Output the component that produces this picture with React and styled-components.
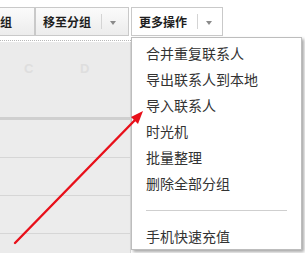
import React from 'react';
import styled, { createGlobalStyle } from 'styled-components';

const Global = createGlobalStyle`
  html, body {
    margin: 0;
    padding: 0;
    background: #fff;
  }
  body {
    font-family: "Noto Sans CJK SC", "Liberation Sans", sans-serif;
    width: 305px;
    height: 253px;
    overflow: hidden;
  }
`

const Page = styled.div`
  position: relative;
  width: 305px;
  height: 253px;
  overflow: hidden;
`

const Toolbar = styled.div`
  display: flex;
  align-items: flex-start;
  padding-top: 7px;
  margin-left: -60px;
  height: 30px;
`

const ToolButton = styled.div`
  display: flex;
  align-items: center;
  justify-content: ${p => p.$end ? 'flex-end' : 'flex-start'};
  box-sizing: border-box;
  height: 29px;
  padding: 0 ${p => p.$end ? 22 : 0}px 0 7px;
  width: ${p => p.$width}px;
  margin-left: ${p => p.$gap || 0}px;
  border: 1px solid #c9c9c9;
  background: ${p => p.$active ? '#fff' : 'linear-gradient(#fbfbfb, #ececec)'};
  font-size: 12px;
  font-weight: bold;
  color: #1e1e1e;
  white-space: nowrap;
`

const Divider = styled.span`
  width: 1px;
  height: 15px;
  background: #d4d4d4;
  margin: 0 8px 0 10px;
`

const Caret = styled.span`
  width: 0;
  height: 0;
  border-left: 3.5px solid transparent;
  border-right: 3.5px solid transparent;
  border-top: 4px solid #8a8a8a;
  margin-top: 2px;
`

const DottedRule = styled.div`
  width: 131px;
  height: 1px;
  margin-top: 3px;
  border-top: 1px dotted #b8b8b8;
`

const Sidebar = styled.div`
  width: 131px;
  box-sizing: border-box;
  border-right: 1px solid #d6d6d6;
  background: #ebebeb;
  height: 213px;
`

const LetterBar = styled.div`
  display: flex;
  height: 78px;
  padding: 19px 0 0 24px;
  box-sizing: border-box;
  gap: 48px;
  border-bottom: 3px solid #cfcfcf;
`

const Letter = styled.span`
  font-family: "Liberation Sans", sans-serif;
  font-size: 13px;
  color: #dedede;
  font-weight: bold;
  width: 8px;
`

const Row = styled.div`
  height: 37px;
  border-bottom: 1px solid #d6d6d6;
  background: #ececec;
`

const Menu = styled.div`
  position: absolute;
  left: 131px;
  top: 37px;
  width: 171px;
  box-sizing: border-box;
  border: 1px solid #bdbdbd;
  background: #fff;
  box-shadow: 2px 2px 3px rgba(0, 0, 0, 0.35);
  padding: 2px 0 0;
`

const MenuItem = styled.div`
  height: 26px;
  line-height: 26px;
  padding-left: 14px;
  font-size: 14px;
  color: #333;
`

const MenuSep = styled.div`
  height: 1px;
  background: #cfcfcf;
  margin: 14px 14px 12px 14px;
`

const Annotation = styled.svg`
  position: absolute;
  left: 0;
  top: 0;
  pointer-events: none;
`

export default function App() {
  const items = ['合并重复联系人', '导出联系人到本地', '导入联系人', '时光机', '批量整理', '删除全部分组'];
  return (
    <Page>
      <Global />
      <Toolbar>
        <ToolButton $width={95} $end>分组</ToolButton>
        <ToolButton $width={94}>
          移至分组<Divider /><Caret />
        </ToolButton>
        <ToolButton $width={92} $active $gap={2}>
          更多操作<Divider /><Caret />
        </ToolButton>
      </Toolbar>
      <DottedRule />
      <Sidebar>
        <LetterBar>
          <Letter>C</Letter>
          <Letter>D</Letter>
        </LetterBar>
        <Row />
        <Row />
        <Row />
      </Sidebar>
      <Menu>
        {items.map((t) => <MenuItem key={t}>{t}</MenuItem>)}
        <MenuSep />
        <MenuItem>手机快速充值</MenuItem>
      </Menu>
      <Annotation width="305" height="253" viewBox="0 0 305 253">
        <line x1="15" y1="243" x2="136" y2="119" stroke="#e8101a" strokeWidth="2.4" strokeLinecap="round" />
        <polygon points="143,111 131,117 138,124" fill="#e8101a" />
      </Annotation>
    </Page>
  );
}
